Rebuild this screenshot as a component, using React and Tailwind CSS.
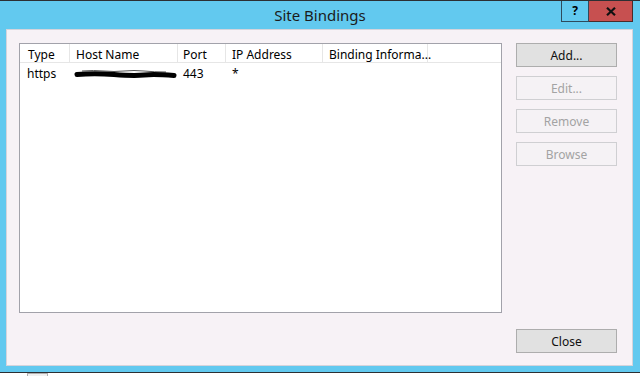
import React from "react";

const font = { fontFamily: '"Noto Sans", "Open Sans", sans-serif' };

function Btn({ children, disabled }) {
  return (
    <div
      className={
        "h-[24px] w-[101px] flex items-center justify-center pt-[1px] text-[12px] border " +
        (disabled
          ? "border-[#cfcfd2] bg-[#f5f2f5] text-[#a3a3a3]"
          : "border-[#adadad] bg-[#e1e1e1] text-[#101010]")
      }
    >
      {children}
    </div>
  );
}

export default function App() {
  const cols = [
    { w: 50, label: "Type", pl: 8 },
    { w: 108, label: "Host Name", pl: 6 },
    { w: 48, label: "Port", pl: 5 },
    { w: 97, label: "IP Address", pl: 6 },
    { w: 105, label: "Binding Informa...", pl: 6 },
  ];
  return (
    <div className="w-[640px] h-[376px] bg-white overflow-hidden relative" style={font}>
      <div className="h-[373px] flex flex-col bg-[#62c9ef] border-t border-b border-[#2c2f33]">
        {/* title bar */}
        <div className="h-[28px] flex relative">
          <div className="flex-1 flex items-center justify-center text-[15px] text-[#1b1b1b]">
            Site Bindings
          </div>
          <div className="absolute right-[7px] top-0 flex">
            <div className="w-[28px] h-[21px] border border-t-0 border-[#2e4a5c] flex items-center justify-center text-[12px] font-bold text-black">
              ?
            </div>
            <div className="w-[44px] h-[21px] border border-t-0 border-l-0 border-[#4a2a2a] bg-[#c75050] flex items-center justify-center">
              <svg width="10" height="9" viewBox="0 0 10 9">
                <path d="M1 0.8 L9 8.2 M9 0.8 L1 8.2" stroke="#111" strokeWidth="2.2" />
              </svg>
            </div>
          </div>
        </div>
        {/* content */}
        <div className="ml-[6px] mr-[7px] mb-[6px] flex-1 bg-[#f7f2f6] border border-[#d4d4dc] flex pl-[12px] pt-[13px]">
          <div className="w-[483px] h-[270px] bg-white border border-[#a2a2aa]">
            <div className="flex h-[19px] border-b border-[#e6e6e6]">
              {cols.map((c) => (
                <div
                  key={c.label}
                  className="h-full border-r border-[#e6e6e6] flex items-center pt-[3px] text-[12px] text-black whitespace-nowrap"
                  style={{ width: c.w, paddingLeft: c.pl }}
                >
                  {c.label}
                </div>
              ))}
            </div>
            <div className="flex h-[20px] items-center pt-[2px] text-[12px] text-black">
              <div className="w-[50px] pl-[7px]">https</div>
              <div className="w-[108px] pl-[4px] flex items-center">
                <svg width="104" height="12" viewBox="0 0 104 12">
                  <path d="M8 3 Q 20 2 30 3 T 50 3 T 70 3 T 92 4" stroke="#555" strokeWidth="1" fill="none" />
                  <path d="M3 6.5 Q 20 5 40 6.5 T 70 7 T 100 7.5" stroke="#000" strokeWidth="5" strokeLinecap="round" fill="none" />
                </svg>
              </div>
              <div className="w-[48px] pl-[5px]">443</div>
              <div className="w-[97px] pl-[6px]">*</div>
            </div>
          </div>
          <div className="ml-[14px] flex flex-col pb-[12px]">
            <div className="flex flex-col gap-[9px]">
              <Btn>Add...</Btn>
              <Btn disabled>Edit...</Btn>
              <Btn disabled>Remove</Btn>
              <Btn disabled>Browse</Btn>
            </div>
            <div className="mt-auto">
              <Btn>Close</Btn>
            </div>
          </div>
        </div>
      </div>
      <div className="absolute left-[27px] top-[373px] w-[21px] h-[4px] border border-[#b0b0b0] bg-[#f0f0f0]" />
    </div>
  );
}
